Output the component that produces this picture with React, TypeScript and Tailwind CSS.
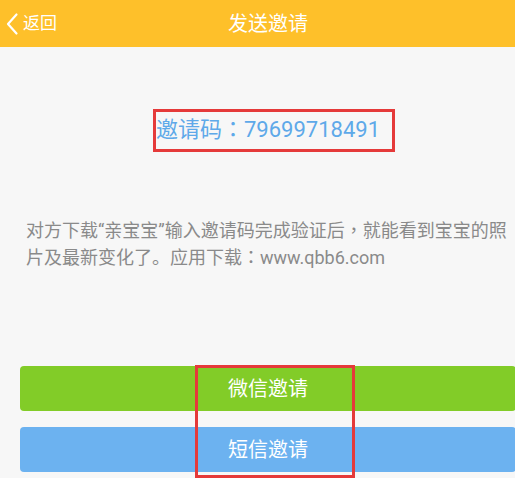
import React from "react";

const font = { fontFamily: 'Roboto, "Noto Sans CJK SC", sans-serif' };

function P({ c }: { c: string }) {
  return (
    <span className="inline-block align-baseline leading-none font-['Noto_Sans_CJK_TC',sans-serif]">
      {c}
    </span>
  );
}

export default function App() {
  return (
    <div
      className="relative w-[515px] h-[478px] overflow-hidden bg-[#f7f7f7]"
      style={font}
    >
      <div className="w-[536px]">
        <header className="relative flex h-[47px] items-center justify-center bg-[#fec02a]">
          <div className="absolute left-[5px] top-0 flex h-full items-center">
            <svg width="14" height="24" viewBox="0 0 14 24" className="mr-[4px]">
              <path
                d="M11.5 2.5 L3 12 L11.5 21.5"
                fill="none"
                stroke="#ffffff"
                strokeWidth="2.2"
                strokeLinecap="round"
                strokeLinejoin="round"
              />
            </svg>
            <span className="text-[17px] leading-none text-white">返回</span>
          </div>
          <h1 className="text-[20px] leading-none text-white">发送邀请</h1>
        </header>

        <div className="mt-[68px] flex h-[30px] justify-center overflow-visible">
          <div className="text-[22px] leading-[30px] text-[#5ea9e9]">
            邀请码<P c="：" />79699718491
          </div>
        </div>

        <p className="mt-[72px] h-[54px] pl-[26px] pr-[26px] text-[18px] leading-[27px] text-[#8a8a8a] whitespace-nowrap">
          对方下载“亲宝宝”输入邀请码完成验证后<P c="，" />就能看到宝宝的照
          <br />
          片及最新变化了。应用下载<P c="：" />www.qbb6.com
        </p>

        <div className="mt-[95px] ml-[20px] flex w-[496px] flex-col gap-[16px]">
          <button className="flex h-[45px] items-center justify-center rounded-[4px] bg-[#82cc28] text-[20px] text-white">
            微信邀请
          </button>
          <button className="flex h-[45px] items-center justify-center rounded-[4px] bg-[#6cb2f0] text-[20px] text-white">
            短信邀请
          </button>
        </div>
      </div>

      <div className="pointer-events-none absolute left-[153px] top-[109px] h-[43px] w-[242px] border-[3px] border-[#e53a3a]" />
      <div className="pointer-events-none absolute left-[195px] top-[365px] h-[113px] w-[160px] border-[3px] border-[#e53a3a]" />
    </div>
  );
}
